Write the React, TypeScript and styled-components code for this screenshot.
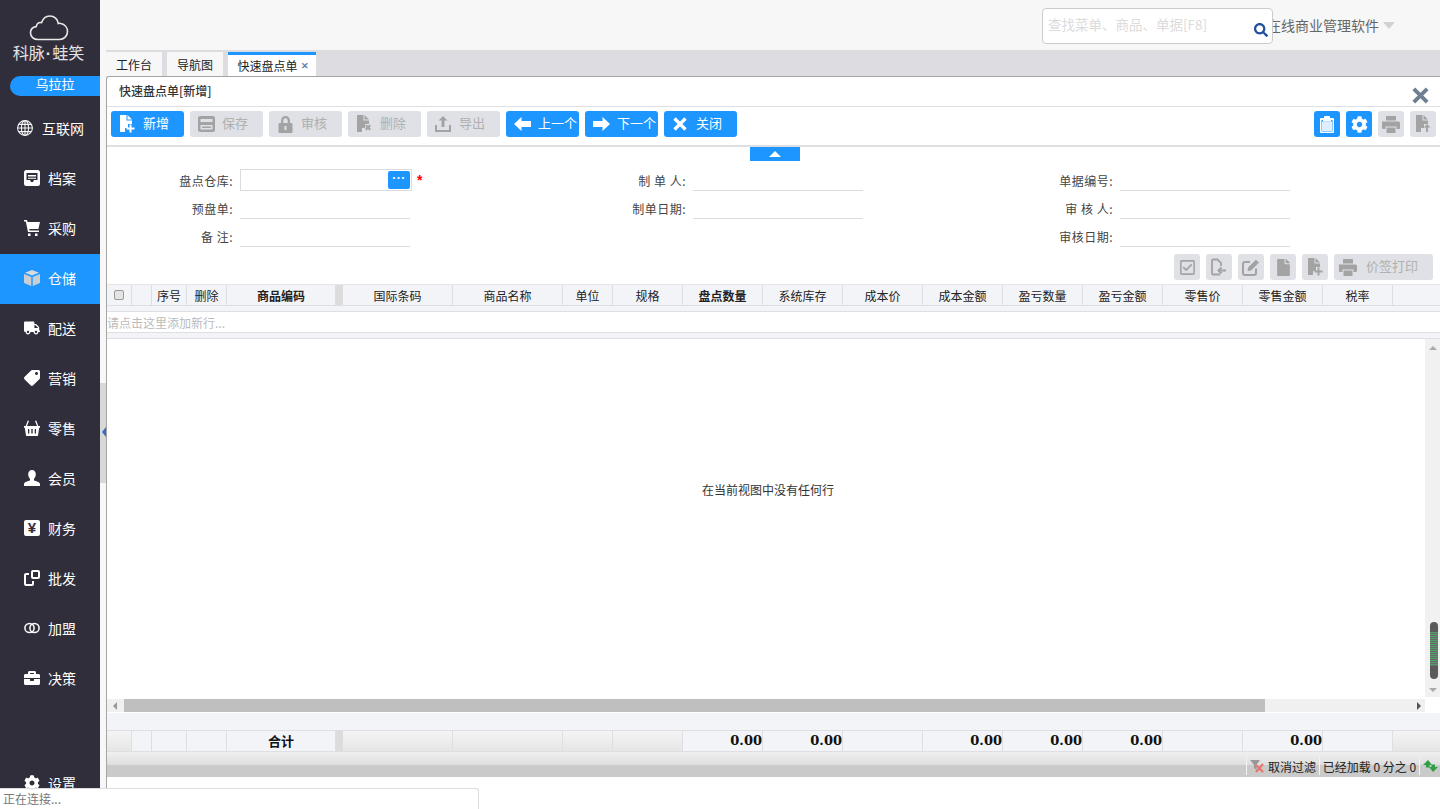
import * as React from "react";
import styled, { createGlobalStyle } from "styled-components";
import { FaTruck, FaTag, FaBriefcase, FaCog, FaRegCheckSquare, FaFile, FaSearch } from "react-icons/fa";

const BLUE = "#1e96ff";
const DARK = "#312e3b";
const MUTED_BG = "#dfe1e6";
const MUTED_FG = "#a3a3a3";
const LINE = "#dfdfe3";
const BAND = "#f3f4f8";

const GlobalStyle = createGlobalStyle`
  html, body {
    margin: 0;
    padding: 0;
    height: 100%;
    overflow: hidden;
    background: #fff;
    font-family: "Noto Sans CJK SC", "Liberation Sans", sans-serif;
    font-size: 12px;
    color: #333;
  }
  * { box-sizing: border-box; }
`;

const Page = styled.div`
  position: relative;
  display: flex;
  width: 1440px;
  height: 809px;
  overflow: hidden;
`;

/* ---------- sidebar ---------- */

const Sidebar = styled.nav`
  width: 100px;
  flex: none;
  display: flex;
  flex-direction: column;
  background: ${DARK};
  color: #fff;
`;

const Logo = styled.div`
  height: 76px;
  padding-top: 15px;
  display: flex;
  flex-direction: column;
  align-items: center;
  padding-right: 3px;
`;

const LogoText = styled.div`
  margin-top: 0;
  font-size: 16px;
  line-height: 22px;
  color: #e4e4e4;
  white-space: nowrap;
`;

const LogoDot = styled.span`
  font-family: "Liberation Sans", sans-serif;
  font-weight: 700;
  margin: 0 1px;
`;

const UserPill = styled.div`
  height: 20px;
  margin: 0 0 8px 10px;
  border-radius: 10px 0 0 10px;
  background: ${BLUE};
  color: #fff;
  font-size: 13px;
  line-height: 16px;
  text-align: center;
`;

const NavItem = styled.div<{ $active?: boolean; $wide?: boolean; $bottom?: boolean }>`
  height: 50px;
  flex: none;
  display: flex;
  align-items: center;
  gap: ${(p) => (p.$wide ? "9px" : "8px")};
  padding-left: ${(p) => (p.$wide ? "17px" : "24px")};
  padding-bottom: 2px;
  margin-top: ${(p) => (p.$bottom ? "auto" : "0")};
  background: ${(p) => (p.$active ? BLUE : "transparent")};
  font-size: 14px;
  color: #fff;
`;

const NavIcon = styled.span`
  width: 16px;
  height: 16px;
  display: flex;
  align-items: center;
  justify-content: center;
  color: #fff;
  font-size: 16px;
`;

const MirroredIcon = styled.span`
  display: flex;
  transform: scaleX(-1);
`;

const YenBox = styled.span`
  width: 16px;
  height: 16px;
  border-radius: 2px;
  background: #fff;
  color: ${DARK};
  font-family: "Liberation Sans", sans-serif;
  font-weight: 700;
  font-size: 15px;
  line-height: 16px;
  text-align: center;
`;

/* ---------- top header ---------- */

const Main = styled.div`
  flex: 1;
  min-width: 0;
  display: flex;
  flex-direction: column;
  background: #f7f7f7;
`;

const TopBar = styled.header`
  height: 50px;
  flex: none;
  display: flex;
  align-items: flex-start;
  justify-content: flex-end;
  padding: 8px 45px 0 0;
`;

const SearchBox = styled.div`
  position: relative;
  z-index: 1;
  width: 231px;
  height: 36px;
  display: flex;
  align-items: center;
  justify-content: space-between;
  padding: 0 4px 4px 5px;
  background: #fff;
  border: 1px solid #ccc;
  border-radius: 4px;
  color: #dcdcdc;
  font-size: 13.5px;
  white-space: nowrap;
`;

const SearchGlyph = styled.span`
  display: flex;
  margin-top: 11px;
  color: #1f4e9a;
  font-size: 14px;
`;

const ProductName = styled.div`
  margin-left: -6px;
  height: 36px;
  padding-bottom: 3px;
  display: flex;
  align-items: center;
  gap: 4px;
  font-size: 14px;
  color: #666;
  white-space: nowrap;
`;

const Caret = styled.span`
  width: 0;
  height: 0;
  margin-top: 2px;
  border-left: 6px solid transparent;
  border-right: 6px solid transparent;
  border-top: 7px solid #d2d2d2;
`;

/* ---------- workspace ---------- */

const MainRow = styled.div`
  flex: 1;
  min-height: 0;
  display: flex;
`;

const Splitter = styled.div`
  width: 6px;
  flex: none;
  padding-top: 333px;
`;

const SplitterHandle = styled.div`
  position: relative;
  height: 100px;
  background: #d8d8d8;
  &::after {
    content: "";
    position: absolute;
    left: 2px;
    top: 44px;
    border-top: 5px solid transparent;
    border-bottom: 5px solid transparent;
    border-right: 4px solid #2f6fc0;
  }
`;

const Workspace = styled.div`
  flex: 1;
  min-width: 0;
  display: flex;
  flex-direction: column;
`;

const TabBar = styled.div`
  height: 26px;
  flex: none;
  display: flex;
  align-items: flex-end;
  gap: 5px;
  padding-top: 2px;
  background: linear-gradient(#dcdce0, #dedee2);
`;

const Tab = styled.div<{ $active?: boolean; $w: number }>`
  width: ${(p) => p.$w}px;
  height: 24px;
  display: flex;
  align-items: center;
  justify-content: center;
  gap: 3px;
  padding-left: ${(p) => (p.$active ? "2px" : "0")};
  background: ${(p) => (p.$active ? "#fff" : "#f7f7f7")};
  border-top: ${(p) => (p.$active ? `3px solid ${BLUE}` : "0")};
  font-size: 12px;
  color: #222;
`;

const TabClose = styled.span`
  color: #6080a8;
  font-size: 9px;
  line-height: 12px;
  font-family: "Liberation Sans", sans-serif;
  font-weight: 700;
`;

const Panel = styled.section`
  flex: 1;
  min-height: 0;
  display: flex;
  flex-direction: column;
  padding-bottom: 32px;
  background: #fff;
  border-top: 1px solid #a5a5a5;
  border-left: 1px solid #a5a5a5;
  border-top-left-radius: 3px;
`;

const TitleBar = styled.div`
  height: 30px;
  flex: none;
  display: flex;
  align-items: center;
  justify-content: space-between;
  padding: 0 11px 2px 12px;
  border-bottom: 1px solid ${LINE};
  font-size: 12px;
  font-weight: 500;
  color: #333;
`;

const PanelClose = styled.span`
  display: flex;
  margin-top: 9px;
  color: #6e7f91;
`;

const Toolbar = styled.div`
  height: 40px;
  flex: none;
  display: flex;
  align-items: flex-start;
  justify-content: space-between;
  padding: 4px 4px 0 4px;
  border-bottom: 2px solid ${LINE};
`;

const ButtonRow = styled.div<{ $end?: boolean }>`
  display: flex;
  gap: 6px;
  justify-content: ${(p) => (p.$end ? "flex-end" : "flex-start")};
`;

const Button = styled.button<{ $primary?: boolean }>`
  width: 73px;
  height: 26px;
  flex: none;
  display: flex;
  align-items: center;
  gap: 7px;
  padding: 0 0 0 7px;
  overflow: hidden;
  white-space: nowrap;
  border: 0;
  border-radius: 3px;
  background: ${(p) => (p.$primary ? BLUE : MUTED_BG)};
  color: ${(p) => (p.$primary ? "#fff" : "#b0b0b0")};
  font-family: inherit;
  font-size: 13px;
`;

const ButtonLabel = styled.span`
  margin-top: -3px;
`;

const ButtonIcon = styled.span<{ $primary?: boolean }>`
  width: 18px;
  flex: none;
  display: flex;
  justify-content: center;
  color: ${(p) => (p.$primary ? "#fff" : MUTED_FG)};
  font-size: 17px;
`;

const SquareButton = styled.button<{ $primary?: boolean }>`
  width: 26px;
  height: 26px;
  flex: none;
  display: flex;
  align-items: center;
  justify-content: center;
  padding: 0;
  border: 0;
  border-radius: 3px;
  background: ${(p) => (p.$primary ? BLUE : MUTED_BG)};
  color: ${(p) => (p.$primary ? "#fff" : MUTED_FG)};
  font-size: 17px;
`;

const PrintLabelButton = styled(Button)`
  width: 99px;
  gap: 9px;
  padding-left: 5px;
`;

const CollapseRow = styled.div`
  height: 14px;
  flex: none;
  display: flex;
  justify-content: center;
  padding-left: 3px;
`;

const CollapseButton = styled.div`
  width: 50px;
  height: 14px;
  display: flex;
  align-items: center;
  justify-content: center;
  background: ${BLUE};
  &::after {
    content: "";
    border-left: 6px solid transparent;
    border-right: 6px solid transparent;
    border-bottom: 6px solid #fff;
  }
`;

/* ---------- form ---------- */

const Form = styled.div`
  height: 89px;
  flex: none;
  display: grid;
  grid-template-columns: 453px 427px 1fr;
  padding-top: 5px;
`;

const FieldColumn = styled.div`
  display: flex;
  flex-direction: column;
`;

const Field = styled.div`
  height: 28px;
  display: flex;
  align-items: center;
  gap: 7px;
`;

const FieldLabel = styled.label`
  width: 126px;
  flex: none;
  text-align: right;
  color: #444;
  font-size: 12px;
  letter-spacing: 0.5px;
  white-space: pre;
`;

const FieldInput = styled.div<{ $boxed?: boolean }>`
  position: relative;
  width: ${(p) => (p.$boxed ? "172px" : "170px")};
  height: 22px;
  background: #fff;
  border-bottom: 1px solid #dcdcdc;
  border-top: ${(p) => (p.$boxed ? "1px solid #dcdcdc" : "0")};
  border-left: ${(p) => (p.$boxed ? "1px solid #dcdcdc" : "0")};
  border-right: ${(p) => (p.$boxed ? "1px solid #dcdcdc" : "0")};
`;

const PickerButton = styled.span`
  position: absolute;
  top: 1px;
  right: 1px;
  width: 22px;
  height: 18px;
  border-radius: 2px;
  background: ${BLUE};
  color: #fff;
  font-family: "Liberation Sans", sans-serif;
  font-weight: 700;
  font-size: 12px;
  line-height: 14px;
  text-align: center;
  letter-spacing: 0.5px;
`;

const Required = styled.span`
  margin-left: -2px;
  color: #f00;
  font-family: "Liberation Sans", sans-serif;
  font-weight: 700;
  font-size: 14px;
  line-height: 14px;
`;

const ActionBar = styled.div`
  height: 34px;
  flex: none;
  padding: 4px 7px 0 0;
`;

/* ---------- grid ---------- */

const HeaderRow = styled.div`
  height: 22px;
  flex: none;
  display: flex;
  background: ${BAND};
  border-top: 1px solid #e6e6ea;
  border-bottom: 1px solid ${LINE};
`;

const HeaderCell = styled.div<{ $w: number; $bold?: boolean; $grip?: boolean }>`
  width: ${(p) => p.$w}px;
  flex: none;
  display: flex;
  align-items: center;
  justify-content: center;
  border-right: ${(p) => (p.$grip ? "0" : `1px solid ${LINE}`)};
  background: ${(p) => (p.$grip ? "#dcdcdc" : "transparent")};
  font-size: 12px;
  font-weight: ${(p) => (p.$bold ? 700 : 400)};
  color: #222;
`;

const RowCheck = styled.span`
  width: 10px;
  height: 10px;
  border: 1px solid #999;
  border-radius: 2px;
  background: #e4e4e4;
`;

const Band = styled.div<{ $h: number }>`
  height: ${(p) => p.$h}px;
  flex: none;
  background: ${BAND};
  border-bottom: 1px solid ${LINE};
`;

const NewRow = styled.div`
  height: 21px;
  flex: none;
  display: flex;
  align-items: center;
  color: #bbb;
  font-size: 12px;
  border-bottom: 1px solid ${LINE};
`;

const GridBody = styled.div`
  flex: 1;
  min-height: 0;
  display: flex;
`;

const EmptyHint = styled.div`
  flex: 1;
  display: flex;
  align-items: center;
  justify-content: center;
  padding: 0 0 58px 4px;
  font-size: 12px;
  color: #333;
`;

const VScroll = styled.div`
  position: relative;
  width: 15px;
  flex: none;
  display: flex;
  flex-direction: column;
  align-items: center;
  justify-content: space-between;
  padding: 7px 0 5px;
  background: #f1f1f1;
`;

const ArrowV = styled.span<{ $down?: boolean }>`
  border-left: 4px solid transparent;
  border-right: 4px solid transparent;
  border-bottom: ${(p) => (p.$down ? "0" : "4px solid #aaa")};
  border-top: ${(p) => (p.$down ? "4px solid #aaa" : "0")};
`;

const VThumb = styled.div`
  position: absolute;
  left: 5px;
  bottom: 18px;
  width: 8px;
  height: 57px;
  border-radius: 4px;
  background:
    repeating-linear-gradient(#4f9c66 0 1px, #6a6a6a 1px 2px) center 10px / 100% 34px no-repeat,
    #5a5a5a;
`;

const HScroll = styled.div`
  height: 16px;
  flex: none;
  display: flex;
  align-items: center;
  padding: 2px 15px 1px 0;
`;

const HTrack = styled.div`
  flex: 1;
  height: 100%;
  display: flex;
  align-items: center;
  background: #f0f0f0;
  margin: -2px 0 -1px;
  padding: 2px 0 1px;
`;

const ArrowH = styled.span<{ $right?: boolean }>`
  flex: none;
  margin: ${(p) => (p.$right ? "0 4px 0 auto" : "0 7px 0 6px")};
  border-top: 4px solid transparent;
  border-bottom: 4px solid transparent;
  border-right: ${(p) => (p.$right ? "0" : "4px solid #999")};
  border-left: ${(p) => (p.$right ? "4px solid #555" : "0")};
`;

const HThumb = styled.div`
  width: 1141px;
  height: 13px;
  background: #bfbfbf;
`;

const SummaryRow = styled.div`
  height: 21px;
  flex: none;
  display: flex;
  background: linear-gradient(#f4f4f4, #e6e6e6);
  border-bottom: 1px solid ${LINE};
`;

const SummaryCell = styled.div<{ $w: number; $plain?: boolean; $grip?: boolean; $num?: boolean }>`
  width: ${(p) => p.$w}px;
  flex: none;
  display: flex;
  align-items: center;
  justify-content: ${(p) => (p.$num ? "flex-end" : "center")};
  padding-bottom: 1px;
  border-right: ${(p) => (p.$grip ? "0" : `1px solid ${LINE}`)};
  background: ${(p) => (p.$grip ? "#dcdcdc" : p.$plain ? BAND : "transparent")};
  color: #111;
  font-size: 13px;
  font-weight: 700;
`;

const SummaryValue = styled.span`
  font-family: "DejaVu Serif", "Liberation Serif", serif;
  font-size: 13px;
`;

const StatusBar = styled.div`
  height: 25px;
  flex: none;
  display: flex;
  align-items: center;
  justify-content: flex-end;
  background: linear-gradient(#f0f0f0 0, #dedede 13px, #cacaca 13px, #cacaca 100%);
  padding-top: 3px;
  font-size: 12px;
  color: #222;
`;

const StatusItem = styled.div<{ $w: number }>`
  width: ${(p) => p.$w}px;
  height: 18px;
  display: flex;
  align-items: center;
  justify-content: center;
  gap: 3px;
  border-left: 1px solid #f4f4f4;
  white-space: nowrap;
`;

const LoadingTip = styled.div`
  position: absolute;
  left: 0;
  bottom: 0;
  width: 479px;
  height: 21px;
  padding: 1px 3px;
  background: #fff;
  border: 1px solid #ddd;
  border-width: 1px 1px 0 0;
  border-top-right-radius: 3px;
  color: #777;
  font-size: 12px;
  line-height: 18px;
`;

/* ---------- drawn icons ---------- */

const CloudLogo = () => (
  <svg width="40" height="26" viewBox="0 0 40 26" fill="none" stroke="#e8e8e8" strokeWidth="1.6">
    <path d="M9 24.5C4.5 24.5 1.5 21.5 1.5 17.8 1.5 14.2 4 12 7.2 11.6 7.8 8.6 10 7.2 12.6 7.6 14 3.4 17.2 1 20.8 1c4.6 0 8 3.3 8.4 7.5 .8-.3 1.8-.3 2.6 0 4.2.8 6.7 4.3 6.7 8 0 4.4-3.4 8-8 8z" />
  </svg>
);

const GlobeIcon = () => (
  <svg width="16" height="16" viewBox="0 0 16 16" fill="none" stroke="#f2f2f2" strokeWidth="1.1">
    <circle cx="8" cy="8" r="7.4" />
    <ellipse cx="8" cy="8" rx="3.6" ry="7.4" />
    <path d="M8 .6v14.8M.6 8h14.8M1.6 4.4h12.8M1.6 11.6h12.8" />
  </svg>
);

const ArchiveIcon = () => (
  <svg width="16" height="16" viewBox="0 0 16 16" fill="#fff">
    <path d="M2.5 0h11A2.5 2.5 0 0 1 16 2.5v11a2.5 2.5 0 0 1-2.5 2.5h-11A2.5 2.5 0 0 1 0 13.5v-11A2.5 2.5 0 0 1 2.5 0zM2.5 3v7h3.5l1 2h2l1-2h3.5V3z" fillRule="evenodd" />
    <path d="M4 5h8v1.5H4zm0 2.7h8v1H4z" />
  </svg>
);

const CartIcon = () => (
  <svg width="16" height="16" viewBox="0 0 16 16" fill="#fff">
    <path d="M0 0h3l.6 2H16l-1.6 7H5.2l.4 1.5H15V12H4L1.8 1.500H0z" />
    <rect x="4" y="13.5" width="2.5" height="2.5" />
    <rect x="11" y="13.5" width="2.5" height="2.5" />
  </svg>
);

const CubeIcon = () => (
  <svg width="16" height="16" viewBox="0 0 16 16" fill="#c9ced4">
    <path d="M8 0l7 2.8L8 5.6 1 2.8z" fill="#d6dade" />
    <path d="M0 4l7.3 2.9V16L0 13z" />
    <path d="M16 4L8.7 6.9V16L16 13z" />
  </svg>
);

const BasketIcon = () => (
  <svg width="16" height="16" viewBox="0 0 16 16" fill="#fff">
    <path d="M3.8 .5l1.200.6L3 6H1.700zM12.200 .5L11 1.100 13 6h1.300z" />
    <path fillRule="evenodd" d="M0 6h16v1.800h-.8L14 15.500a.6.6 0 0 1-.6.5H2.600a.6.6 0 0 1-.6-.5L.8 7.800H0zM4 9v4.500h1.300V9zm3.300 0v4.500h1.400V9zm3.400 0v4.500H12V9z" />
  </svg>
);

const BustIcon = () => (
  <svg width="16" height="16" viewBox="0 0 16 16" fill="#fff">
    <path d="M8 0c2.400 0 3.800 1.800 3.800 4.300 0 2-1 3.700-1.800 4.600v1.600c2.200.7 6 1.700 6 3.500V16H0v-2c0-1.800 3.800-2.800 6-3.500V8.900C5.200 8 4.200 6.300 4.200 4.300 4.200 1.800 5.600 0 8 0z" />
  </svg>
);

const CopyLinkIcon = () => (
  <svg width="16" height="16" viewBox="0 0 16 16" fill="none" stroke="#fff" strokeWidth="2">
    <rect x="8" y="1" width="7" height="7" rx="1" />
    <path d="M5 4H2a1 1 0 0 0-1 1v9a1 1 0 0 0 1 1h6a1 1 0 0 0 1-1v-3" />
  </svg>
);

const RingsIcon = () => (
  <svg width="16" height="12" viewBox="0 0 16 12" fill="none" stroke="#fff" strokeWidth="1.5">
    <circle cx="5.5" cy="6" r="4.6" />
    <circle cx="10.5" cy="6" r="4.6" />
  </svg>
);

const FileBadge = ({ kind }: { kind: "plus" | "x" | "up" }) => (
  <svg width="18" height="18" viewBox="0 0 18 18" fill="currentColor">
    <path d="M2 0h6.500v5.500H14V9h-4v4H7v4H2z" />
    <path d="M9.500 0L14 4.500H9.500z" />
    {kind === "plus" && <path d="M11.500 9.500h2v3h3v2h-3v3h-2v-3h-3v-2h3z" />}
    {kind === "x" && <path d="M10 11l1.500-1.500 1.500 1.500 1.500-1.500L16 11l-1.500 1.500L16 14l-1.500 1.500L13 14l-1.500 1.500L10 14l1.500-1.500z" />}
    {kind === "up" && <path d="M13 9l3.500 3.500h-2.500V17h-2v-4.500H9.500z" />}
  </svg>
);

const SaveIcon = () => (
  <svg width="17" height="16" viewBox="0 0 17 16" fill="currentColor">
    <path fillRule="evenodd" d="M2 0h13a2 2 0 0 1 2 2v12a2 2 0 0 1-2 2H2a2 2 0 0 1-2-2V2a2 2 0 0 1 2-2zm.500 3v3h12V3zm0 6v4.500h12V9zM4 10.500h9V12H4z" />
  </svg>
);

const LockIcon = () => (
  <svg width="15" height="17" viewBox="0 0 15 17" fill="currentColor">
    <path fillRule="evenodd" d="M3 7V4.500a4.500 4.500 0 0 1 9 0V7h1.500a1 1 0 0 1 1 1v8a1 1 0 0 1-1 1h-12a1 1 0 0 1-1-1V8a1 1 0 0 1 1-1zm2.300 0h4.400V4.500a2.200 2.200 0 0 0-4.400 0zM6.500 10v4h2v-4z" />
  </svg>
);

const UploadIcon = () => (
  <svg width="18" height="18" viewBox="0 0 18 18" fill="currentColor">
    <path d="M9 1l4.500 4.500H10.500V12h-3V5.500H4.500z" />
    <path d="M1 10h2v5h12v-5h2v7H1z" />
  </svg>
);

const BlockArrow = ({ right }: { right?: boolean }) => (
  <svg width="17" height="14" viewBox="0 0 17 14" fill="currentColor">
    <path d={right ? "M17 7l-7.500 7v-4H0V4h9.500V0z" : "M0 7l7.500 7v-4H17V4H7.500V0z"} />
  </svg>
);

const HeavyX = ({ size = 14 }: { size?: number }) => (
  <svg width={size} height={size} viewBox="0 0 14 14" fill="none" stroke="currentColor" strokeWidth="3.200">
    <path d="M1.500 1.500l11 11M12.500 1.500l-11 11" />
  </svg>
);

const ClipboardIcon = () => (
  <svg width="14" height="17" viewBox="0 0 14 17" fill="#fff">
    <path fillRule="evenodd" d="M1 2h3V1a1 1 0 0 1 1-1h4a1 1 0 0 1 1 1v1h3a1 1 0 0 1 1 1v13a1 1 0 0 1-1 1H1a1 1 0 0 1-1-1V3a1 1 0 0 1 1-1zm.500 2v11.500h11V4H11v1.500H3V4z" />
    <rect x="2" y="5.500" width="10" height="9.500" opacity="0.850" />
  </svg>
);

const PrintIcon = () => (
  <svg width="18" height="17" viewBox="0 0 18 17" fill="currentColor">
    <path d="M4 0h10v4.500H4z" />
    <path fillRule="evenodd" d="M1.500 5.500h15A1.500 1.500 0 0 1 18 7v5a1 1 0 0 1-1 1h-2.500v-2.500h-11V13H1a1 1 0 0 1-1-1V7a1 1 0 0 1 1.500-1.500z" />
    <path d="M4.500 11.500h9V17h-9z" />
  </svg>
);

const ShareFileIcon = () => (
  <svg width="18" height="18" viewBox="0 0 18 18" fill="none" stroke="currentColor" strokeWidth="1.800">
    <path d="M11 8V5L7.500 1.500H3a1 1 0 0 0-1 1v13a1 1 0 0 0 1 1h7" />
    <path d="M16 12.500H9" strokeWidth="2" />
    <path d="M11.500 9.500L8.500 12.500l3 3" strokeWidth="2" />
  </svg>
);

const EditBoxIcon = () => (
  <svg width="18" height="17" viewBox="0 0 18 17" fill="none" stroke="currentColor" strokeWidth="2">
    <path d="M14 9.500V14a2 2 0 0 1-2 2H3a2 2 0 0 1-2-2V5a2 2 0 0 1 2-2h5" />
    <path d="M6 11.500l.6-3L14 1.200l2.500 2.500L9 11z" fill="currentColor" strokeWidth="1" />
  </svg>
);

const FilterOffIcon = () => (
  <svg width="15" height="15" viewBox="0 0 15 15">
    <path d="M0 1h10L6.500 6v5L4 9V6z" fill="#999" />
    <path d="M6 6l7 7M13 5l-7 8" stroke="#e8736a" strokeWidth="2" />
  </svg>
);

const RefreshIcon = () => (
  <svg width="15" height="15" viewBox="0 0 15 15" fill="#2f9e44">
    <path d="M5 1L0 6h3v2.500h3.500V6H9z" />
    <path d="M10 13l5-5h-3V5.500H8.500V8H6z" />
  </svg>
);

/* ---------- data ---------- */

const navItems: { label: string; icon: React.ReactNode; wide?: boolean; active?: boolean }[] = [
  { label: "互联网", icon: <GlobeIcon />, wide: true },
  { label: "档案", icon: <ArchiveIcon /> },
  { label: "采购", icon: <CartIcon /> },
  { label: "仓储", icon: <CubeIcon />, active: true },
  { label: "配送", icon: <FaTruck /> },
  { label: "营销", icon: <MirroredIcon><FaTag /></MirroredIcon> },
  { label: "零售", icon: <BasketIcon /> },
  { label: "会员", icon: <BustIcon /> },
  { label: "财务", icon: <YenBox>¥</YenBox> },
  { label: "批发", icon: <CopyLinkIcon /> },
  { label: "加盟", icon: <RingsIcon /> },
  { label: "决策", icon: <FaBriefcase /> },
];

const toolButtons: { label: string; icon: React.ReactNode; primary?: boolean }[] = [
  { label: "新增", icon: <FileBadge kind="plus" />, primary: true },
  { label: "保存", icon: <SaveIcon /> },
  { label: "审核", icon: <LockIcon /> },
  { label: "删除", icon: <FileBadge kind="x" /> },
  { label: "导出", icon: <UploadIcon /> },
  { label: "上一个", icon: <BlockArrow />, primary: true },
  { label: "下一个", icon: <BlockArrow right />, primary: true },
  { label: "关闭", icon: <HeavyX />, primary: true },
];

const columns: { label?: string; w: number; bold?: boolean; grip?: boolean; check?: boolean }[] = [
  { w: 25, check: true },
  { w: 20 },
  { label: "序号", w: 35 },
  { label: "删除", w: 40 },
  { label: "商品编码", w: 109, bold: true },
  { w: 7, grip: true },
  { label: "国际条码", w: 110 },
  { label: "商品名称", w: 110 },
  { label: "单位", w: 50 },
  { label: "规格", w: 70 },
  { label: "盘点数量", w: 80, bold: true },
  { label: "系统库存", w: 80 },
  { label: "成本价", w: 80 },
  { label: "成本金额", w: 80 },
  { label: "盈亏数量", w: 80 },
  { label: "盈亏金额", w: 80 },
  { label: "零售价", w: 80 },
  { label: "零售金额", w: 80 },
  { label: "税率", w: 70 },
];

const summaryValues: Record<number, boolean> = { 10: true, 11: true, 13: true, 14: true, 15: true, 17: true };
const plainSummary = (i: number) => (i >= 1 && i <= 4) || i >= 10;

export default function App() {
  return (
    <Page>
      <GlobalStyle />
      <Sidebar>
        <Logo>
          <CloudLogo />
          <LogoText>
            科脉<LogoDot>·</LogoDot>蛙笑
          </LogoText>
        </Logo>
        <UserPill>乌拉拉</UserPill>
        {navItems.map((n) => (
          <NavItem key={n.label} $active={n.active} $wide={n.wide}>
            <NavIcon>{n.icon}</NavIcon>
            {n.label}
          </NavItem>
        ))}
        <NavItem $bottom>
          <NavIcon>
            <FaCog />
          </NavIcon>
          设置
        </NavItem>
      </Sidebar>

      <Main>
        <TopBar>
          <SearchBox>
            查找菜单、商品、单据[F8]
            <SearchGlyph>
              <FaSearch />
            </SearchGlyph>
          </SearchBox>
          <ProductName>
            在线商业管理软件
            <Caret />
          </ProductName>
        </TopBar>

        <MainRow>
          <Splitter>
            <SplitterHandle />
          </Splitter>
          <Workspace>
            <TabBar>
              <Tab $w={56}>工作台</Tab>
              <Tab $w={56}>导航图</Tab>
              <Tab $w={88} $active>
                快速盘点单
                <TabClose>✕</TabClose>
              </Tab>
            </TabBar>

            <Panel>
              <TitleBar>
                快速盘点单[新增]
                <PanelClose>
                  <HeavyX size={17} />
                </PanelClose>
              </TitleBar>

              <Toolbar>
                <ButtonRow>
                  {toolButtons.map((b) => (
                    <Button key={b.label} $primary={b.primary}>
                      <ButtonIcon $primary={b.primary}>{b.icon}</ButtonIcon>
                      <ButtonLabel>{b.label}</ButtonLabel>
                    </Button>
                  ))}
                </ButtonRow>
                <ButtonRow>
                  <SquareButton $primary>
                    <ClipboardIcon />
                  </SquareButton>
                  <SquareButton $primary>
                    <FaCog />
                  </SquareButton>
                  <SquareButton>
                    <PrintIcon />
                  </SquareButton>
                  <SquareButton>
                    <FileBadge kind="up" />
                  </SquareButton>
                </ButtonRow>
              </Toolbar>

              <CollapseRow>
                <CollapseButton />
              </CollapseRow>

              <Form>
                <FieldColumn>
                  <Field>
                    <FieldLabel>盘点仓库:</FieldLabel>
                    <FieldInput $boxed>
                      <PickerButton>···</PickerButton>
                    </FieldInput>
                    <Required>*</Required>
                  </Field>
                  <Field>
                    <FieldLabel>预盘单:</FieldLabel>
                    <FieldInput />
                  </Field>
                  <Field>
                    <FieldLabel>备 注:</FieldLabel>
                    <FieldInput />
                  </Field>
                </FieldColumn>
                <FieldColumn>
                  <Field>
                    <FieldLabel>制 单 人:</FieldLabel>
                    <FieldInput />
                  </Field>
                  <Field>
                    <FieldLabel>制单日期:</FieldLabel>
                    <FieldInput />
                  </Field>
                </FieldColumn>
                <FieldColumn>
                  <Field>
                    <FieldLabel>单据编号:</FieldLabel>
                    <FieldInput />
                  </Field>
                  <Field>
                    <FieldLabel>审 核 人:</FieldLabel>
                    <FieldInput />
                  </Field>
                  <Field>
                    <FieldLabel>审核日期:</FieldLabel>
                    <FieldInput />
                  </Field>
                </FieldColumn>
              </Form>

              <ActionBar>
                <ButtonRow $end>
                  <SquareButton>
                    <FaRegCheckSquare />
                  </SquareButton>
                  <SquareButton>
                    <ShareFileIcon />
                  </SquareButton>
                  <SquareButton>
                    <EditBoxIcon />
                  </SquareButton>
                  <SquareButton>
                    <FaFile />
                  </SquareButton>
                  <SquareButton>
                    <FileBadge kind="plus" />
                  </SquareButton>
                  <PrintLabelButton>
                    <ButtonIcon>
                      <PrintIcon />
                    </ButtonIcon>
                    <ButtonLabel>价签打印</ButtonLabel>
                  </PrintLabelButton>
                </ButtonRow>
              </ActionBar>

              <HeaderRow>
                {columns.map((c, i) => (
                  <HeaderCell key={i} $w={c.w} $bold={c.bold} $grip={c.grip}>
                    {c.check ? <RowCheck /> : c.label}
                  </HeaderCell>
                ))}
              </HeaderRow>
              <Band $h={6} />
              <NewRow>请点击这里添加新行...</NewRow>
              <Band $h={6} />

              <GridBody>
                <EmptyHint>在当前视图中没有任何行</EmptyHint>
                <VScroll>
                  <ArrowV />
                  <VThumb />
                  <ArrowV $down />
                </VScroll>
              </GridBody>

              <HScroll>
                <HTrack>
                  <ArrowH />
                  <HThumb />
                  <ArrowH $right />
                </HTrack>
              </HScroll>
              <Band $h={18} />

              <SummaryRow>
                {columns.map((c, i) => (
                  <SummaryCell key={i} $w={c.w} $grip={c.grip} $plain={plainSummary(i)} $num={summaryValues[i]}>
                    {i === 4 && "合计"}
                    {summaryValues[i] && <SummaryValue>0.00</SummaryValue>}
                  </SummaryCell>
                ))}
              </SummaryRow>

              <StatusBar>
                <StatusItem $w={73}>
                  <FilterOffIcon />
                  取消过滤
                </StatusItem>
                <StatusItem $w={100}>已经加载 0 分之 0</StatusItem>
                <StatusItem $w={21}>
                  <RefreshIcon />
                </StatusItem>
              </StatusBar>
            </Panel>
          </Workspace>
        </MainRow>
      </Main>

      <LoadingTip>正在连接...</LoadingTip>
    </Page>
  );
}
